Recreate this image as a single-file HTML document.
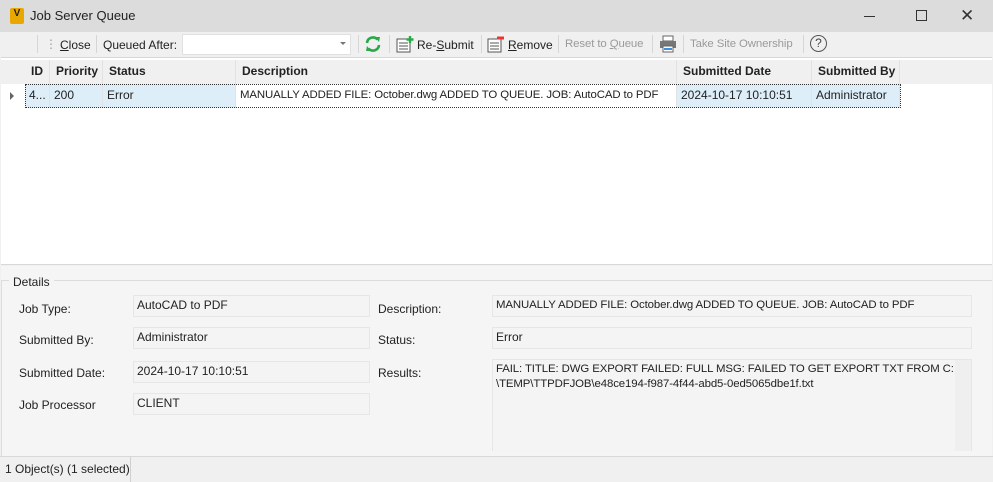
<!DOCTYPE html>
<html><head><style>
*{margin:0;padding:0;box-sizing:border-box}
body{width:993px;height:482px;overflow:hidden;font-family:"Liberation Sans",sans-serif;font-size:12px;color:#222;background:#f0f0f0;position:relative}
.a{position:absolute;white-space:nowrap}
.u{text-decoration:underline}
.g{color:#9a9a9a}
.sep{position:absolute;top:35px;width:1px;height:18px;background:#d6d6d6}
.hd{position:absolute;top:60px;height:24px;line-height:22px;font-weight:bold;padding-left:6px;border-right:1px solid #e2e2e2;white-space:nowrap}
.cl{position:absolute;top:84px;height:24px;line-height:23px;padding-left:4px;border-right:1px solid #e2e2e2;white-space:nowrap;overflow:hidden}
.box{position:absolute;height:22px;border:1px solid #e6e6e6;background:#f4f4f4;line-height:18px;padding-left:3px;white-space:nowrap;overflow:hidden}
.lb{position:absolute;white-space:nowrap}
.n{font-size:11.4px;letter-spacing:-0.1px}
</style></head><body>
<div class="a" style="left:0;top:0;width:993px;height:32px;background:#dcdcdc"></div>
<div class="a" style="left:10px;top:8px;width:14px;height:16px;background:#e8a800;border-radius:2px;color:#222;font-weight:bold;font-size:10px;text-align:center;line-height:12px">V</div>
<div class="a" style="left:30px;top:8px;font-size:13px;color:#222">Job Server Queue</div>
<div class="a" style="left:864px;top:16px;width:11px;height:1px;background:#333"></div>
<div class="a" style="left:916px;top:10px;width:11px;height:11px;border:1px solid #333"></div>
<div class="a" style="left:960px;top:6px;font-size:17px;color:#333">✕</div>
<!-- toolbar -->
<div class="a" style="left:0;top:32px;width:993px;height:25px;background:#f0f0f0"></div>
<div class="sep" style="left:37px"></div>
<div class="a g" style="left:45px;top:37px">⋮</div>
<div class="a" style="left:60px;top:38px"><span class="u">C</span>lose</div>
<div class="sep" style="left:96px"></div>
<div class="a" style="left:103px;top:38px">Queued After:</div>
<div class="a" style="left:182px;top:34px;width:169px;height:21px;background:#fff;border:1px solid #e0e0e0"></div>
<div class="a" style="left:340px;top:42px;border-left:3px solid transparent;border-right:3px solid transparent;border-top:3px solid #777"></div>
<div class="sep" style="left:358px"></div>
<svg class="a" style="left:364px;top:35px" width="18" height="18" viewBox="0 0 18 18"><path d="M3 8a6 6 0 0 1 10.5-3.5M15 10a6 6 0 0 1-10.5 3.5" stroke="#2aa84a" stroke-width="2.6" fill="none"/><path d="M11 2l5 0-1 5zM7 16l-5 0 1-5z" fill="#2aa84a"/></svg>
<div class="sep" style="left:389px"></div>
<svg class="a" style="left:396px;top:36px" width="18" height="17"><rect x="1" y="3" width="13" height="13" fill="#fff" stroke="#555"/><path d="M3 7h9M3 10h9M3 13h9" stroke="#555"/><path d="M14 0v7M10.5 3.5h7" stroke="#2aa84a" stroke-width="2.4"/></svg>
<div class="a" style="left:417px;top:38px">Re-<span class="u">S</span>ubmit</div>
<div class="sep" style="left:481px"></div>
<svg class="a" style="left:487px;top:36px" width="18" height="17"><rect x="1" y="3" width="13" height="13" fill="#fff" stroke="#555"/><path d="M3 7h9M3 10h9M3 13h9" stroke="#555"/><path d="M10 2h7" stroke="#e33" stroke-width="3"/></svg>
<div class="a" style="left:508px;top:38px"><span class="u">R</span>emove</div>
<div class="sep" style="left:558px"></div>
<div class="a g n" style="left:565px;top:38px">Reset to <span class="u">Q</span>ueue</div>
<div class="sep" style="left:652px"></div>
<svg class="a" style="left:659px;top:35px" width="18" height="18"><rect x="4" y="1" width="10" height="5" fill="#fff" stroke="#666"/><rect x="1" y="6" width="16" height="7" fill="#777"/><rect x="4" y="11" width="10" height="6" fill="#fff" stroke="#666"/><rect x="5" y="13" width="8" height="2" fill="#3b8fdc"/></svg>
<div class="sep" style="left:683px"></div>
<div class="a g n" style="left:690px;top:38px">Take Site Ownership</div>
<div class="sep" style="left:803px"></div>
<div class="a" style="left:810px;top:35px;width:17px;height:17px;border:1.5px solid #555;border-radius:50%;text-align:center;line-height:14px;font-size:12px;color:#444">?</div>
<!-- grid -->
<div class="a" style="left:1px;top:57px;width:991px;height:208px;background:#fff;border-top:1px solid #d8d8d8;border-bottom:1px solid #d8d8d8"></div>
<div class="a" style="left:1px;top:60px;width:991px;height:24px;background:#f0f0f0"></div>
<div class="hd" style="left:25px;width:25px">ID</div>
<div class="hd" style="left:50px;width:53px">Priority</div>
<div class="hd" style="left:103px;width:133px">Status</div>
<div class="hd" style="left:236px;width:441px">Description</div>
<div class="hd" style="left:677px;width:135px">Submitted Date</div>
<div class="hd" style="left:812px;width:88px">Submitted By</div>
<div class="a" style="left:10px;top:92px;border-top:4px solid transparent;border-bottom:4px solid transparent;border-left:4px solid #666"></div>
<div class="cl" style="left:25px;width:25px;background:#ddeef9">4...</div>
<div class="cl" style="left:50px;width:53px;background:#ddeef9">200</div>
<div class="cl" style="left:103px;width:133px;background:#ddeef9">Error</div>
<div class="cl n" style="left:236px;width:441px">MANUALLY ADDED FILE: October.dwg ADDED TO QUEUE. JOB: AutoCAD to PDF</div>
<div class="cl" style="left:677px;width:135px;background:#ddeef9">2024-10-17 10:10:51</div>
<div class="cl" style="left:812px;width:88px;background:#ddeef9">Administrator</div>
<div class="a" style="left:25px;top:84px;width:876px;height:24px;border:1px dotted #333"></div>
<!-- details -->
<div class="a" style="left:1px;top:266px;width:991px;height:191px;background:#f5f5f5"></div>
<div class="a" style="left:2px;top:280px;width:990px;height:1px;background:#dcdcdc"></div>
<div class="a" style="left:1px;top:280px;width:1px;height:177px;background:#dcdcdc"></div>
<div class="a" style="left:9px;top:275px;padding:0 4px;background:#f5f5f5">Details</div>
<div class="lb" style="left:19px;top:302px">Job Type:</div>
<div class="lb" style="left:19px;top:333px">Submitted By:</div>
<div class="lb" style="left:19px;top:366px">Submitted Date:</div>
<div class="lb" style="left:19px;top:398px">Job Processor</div>
<div class="box" style="left:133px;top:295px;width:237px">AutoCAD to PDF</div>
<div class="box" style="left:133px;top:327px;width:237px">Administrator</div>
<div class="box" style="left:133px;top:361px;width:237px">2024-10-17 10:10:51</div>
<div class="box" style="left:133px;top:393px;width:237px">CLIENT</div>
<div class="lb" style="left:378px;top:302px">Description:</div>
<div class="lb" style="left:378px;top:333px">Status:</div>
<div class="lb" style="left:378px;top:366px">Results:</div>
<div class="box n" style="left:492px;top:295px;width:480px">MANUALLY ADDED FILE: October.dwg ADDED TO QUEUE. JOB: AutoCAD to PDF</div>
<div class="box" style="left:492px;top:327px;width:480px">Error</div>
<div class="a n" style="left:492px;top:359px;width:480px;height:92px;border:1px solid #e6e6e6;border-bottom:none;background:#f4f4f4;padding:2px 3px;line-height:15px">FAIL: TITLE: DWG EXPORT FAILED: FULL MSG: FAILED TO GET EXPORT TXT FROM C:<br>\TEMP\TTPDFJOB\e48ce194-f987-4f44-abd5-0ed5065dbe1f.txt</div>
<div class="a" style="left:955px;top:360px;width:16px;height:91px;background:#efefef"></div>
<!-- status -->
<div class="a" style="left:0;top:456px;width:993px;height:26px;background:#f0f0f0;border-top:1px solid #d8d8d8"></div>
<div class="a" style="left:130px;top:457px;width:1px;height:25px;background:#d0d0d0"></div>
<div class="a" style="left:5px;top:462px">1 Object(s) (1 selected)</div>
</body></html>
